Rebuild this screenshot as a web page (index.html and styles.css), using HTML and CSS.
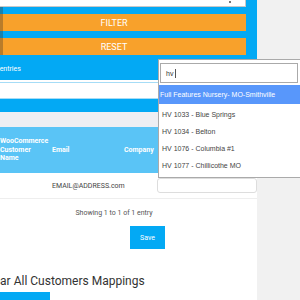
FILE: index.html
```html
<!DOCTYPE html>
<html lang="en">
<head>
    <meta charset="UTF-8">
    <title>Customer Mappings</title>
    <link rel="stylesheet" href="styles.css">
</head>
<body>
    <div class="page">
        <div class="panel">
            <div class="pick"><span class="pick-arrow"></span></div>
            <button class="btn-orange">FILTER</button>
            <button class="btn-orange">RESET</button>
            <div class="len">Show <span class="len-num">10</span> entries</div>
        </div>
        <div class="shade"></div>

        <input class="search" type="text">
        <div class="strip-blue"></div>
        <div class="strip-gray"></div>

        <div class="grid head">
            <div class="cell">WooCommerce Customer Name</div>
            <div class="cell">Email</div>
            <div class="cell">Company</div>
            <div class="cell"></div>
        </div>
        <div class="grid row">
            <div class="cell"></div>
            <div class="cell">EMAIL@ADDRESS.com</div>
            <div class="cell"></div>
            <div class="cell"><div class="sel"></div></div>
        </div>

        <p class="info">Showing 1 to 1 of 1 entry</p>
        <button class="save">Save</button>

        <h2 class="title">Clear All Customers Mappings</h2>
        <button class="btn-blue">Clear</button>

        <div class="drop">
            <div class="drop-search">
                <div class="drop-input">hv<span class="caret"></span></div>
            </div>
            <ul class="results">
                <li class="active">Full Features Nursery- MO-Smithville</li>
                <li>HV 1033 - Blue Springs</li>
                <li>HV 1034 - Belton</li>
                <li>HV 1076 - Columbia #1</li>
                <li>HV 1077 - Chillicothe MO</li>
            </ul>
        </div>
    </div>
</body>
</html>
```

FILE: styles.css
```css
* { margin: 0; padding: 0; box-sizing: border-box; }
html, body { height: 100%; }
body {
    background: #f1f1f1;
    font-family: Roboto, "Liberation Sans", sans-serif;
    overflow: hidden;
}
.page {
    position: relative;
    width: 286px;
    height: 310px;
    margin: -10px 0 0 -29px;
    background: #fff;
}
.panel {
    display: flex;
    flex-direction: column;
    gap: 7px;
    height: 90px;
    padding: 0 11px;
    background: #03a9f4;
}
.pick {
    display: flex;
    justify-content: flex-end;
    height: 17px;
    padding: 10px 14px 0 0;
    border: 1px solid #c8c8c8;
    background: #fff;
}
.pick-arrow {
    width: 2px;
    height: 2px;
    background: #777;
}
.btn-orange {
    height: 17px;
    border: 0;
    font-family: inherit;
    font-size: 9px;
    color: #fff;
    background: #f8a12b;
}
.len {
    margin: 0 0 0 -11px;
    font-size: 7px;
    line-height: 14px;
    color: #fff;
}
.shade {
    position: absolute;
    left: 29px; top: 17px;
    width: 3px; height: 48px;
    background: rgba(70, 55, 40, 0.35);
}
.search {
    display: block;
    width: 100%;
    height: 17px;
    margin-top: 2px;
    border: 1px solid #a6dcf6;
    outline: none;
}
.strip-blue { height: 13px; background: #03a9f4; }
.strip-gray { height: 15px; background: #eeeff3; }
.grid {
    display: grid;
    grid-template-columns: 52px 72px 41px 1fr;
    margin-left: 21px;
}
.cell { padding-left: 8px; }
.head {
    align-items: center;
    height: 46px;
    font-size: 7px;
    font-weight: 700;
    line-height: 8.5px;
    color: #fff;
    background: #5ac4f6;
    margin-left: 0;
    padding-left: 21px;
}
.row {
    align-items: center;
    height: 26px;
    font-size: 7px;
    color: #444;
    border-bottom: 1px solid #eee;
}
.sel {
    height: 15px;
    margin-left: -8px;
    border: 1px solid #ddd;
    border-radius: 3px;
}
.info {
    margin-top: 7px;
    font-size: 7px;
    line-height: 14px;
    color: #555;
    text-align: center;
}
.save {
    display: block;
    width: 35px; height: 23px;
    margin: 6px 0 0 159px;
    border: 0;
    font-family: inherit;
    font-size: 7px;
    color: #fff;
    background: #03a9f4;
}
.title {
    margin: 24px 0 0 12px;
    font-size: 12px;
    font-weight: 400;
    line-height: 16px;
    color: #333;
}
.btn-blue {
    display: block;
    width: 67px; height: 24px;
    margin: 3px 0 0 12px;
    border: 0;
    font-family: inherit;
    font-size: 8px;
    color: #fff;
    background: #03a9f4;
}
.drop {
    position: absolute;
    left: 187px; top: 69px;
    width: 146px; height: 119px;
    border: 1px solid #aaa;
    background: #fff;
    font-family: "Liberation Sans", Arial, sans-serif;
}
.drop-search { padding: 3px 0 0 1px; }
.drop-input {
    display: flex;
    align-items: center;
    width: 138px; height: 20px;
    padding-left: 5px;
    border: 1px solid #aaa;
    font-size: 7px;
    color: #333;
}
.caret {
    width: 1px; height: 9px;
    margin-left: 2px;
    background: #555;
}
.results {
    list-style: none;
    margin-top: 2px;
}
.results li {
    height: 17px;
    padding-left: 3px;
    font-size: 7px;
    line-height: 17px;
    color: #444;
}
.results li.active {
    height: 19px;
    margin-bottom: 2px;
    line-height: 19px;
    padding-left: 1px;
    color: #fff;
    background: #5897fb;
}
```
